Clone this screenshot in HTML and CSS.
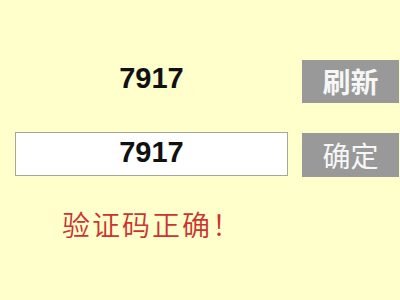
FILE: index.html
```html
<!DOCTYPE html>
<html lang="zh-CN">
<head>
<meta charset="utf-8">
<title>验证码</title>
<link rel="stylesheet" href="styles.css">
</head>
<body>
<div class="page">
  <div class="row">
    <div class="code">7917</div>
    <button class="btn btn-bold" type="button">刷新</button>
  </div>
  <div class="row row-input">
    <input class="code-input" type="text" value="7917">
    <button class="btn btn-confirm" type="button">确定</button>
  </div>
  <div class="message">验证码正确！</div>
</div>
</body>
</html>
```
FILE: styles.css
```css
html, body {
  margin: 0;
  padding: 0;
  background: #ffffcc;
  width: 400px;
  height: 300px;
  overflow: hidden;
}

.page {
  padding: 60px 0 0 15px;
}

.row {
  display: flex;
  align-items: flex-start;
  gap: 14px;
}

.code {
  width: 273px;
  height: 43px;
  line-height: 36px;
  text-align: center;
  font-family: "Liberation Sans", Arial, sans-serif;
  font-weight: bold;
  font-size: 29px;
  color: #111;
}

.btn {
  width: 97px;
  height: 43px;
  border: none;
  margin: 0;
  padding: 0;
  background: #999999;
  color: #f6f6f6;
  font-family: "Noto Sans CJK SC", sans-serif;
  font-size: 28px;
  line-height: 43px;
}

.btn-bold {
  font-weight: bold;
}

.row-input {
  margin-top: 29px;
}

.code-input {
  box-sizing: border-box;
  width: 273px;
  height: 44px;
  margin: 0;
  padding: 0 0 4px 0;
  border: 1px solid #a6a69a;
  background: #ffffff;
  text-align: center;
  font-family: "Liberation Sans", Arial, sans-serif;
  font-weight: bold;
  font-size: 29px;
  color: #111;
  outline: none;
}

.btn-confirm {
  height: 44px;
  margin-top: 1px;
  font-weight: 400;
  line-height: 44px;
}

.message {
  margin: 33px 0 0 47px;
  font-family: "Noto Sans CJK SC", sans-serif;
  font-weight: 350;
  font-size: 28px;
  line-height: 28px;
  letter-spacing: 2px;
  color: #cc3333;
}
```
